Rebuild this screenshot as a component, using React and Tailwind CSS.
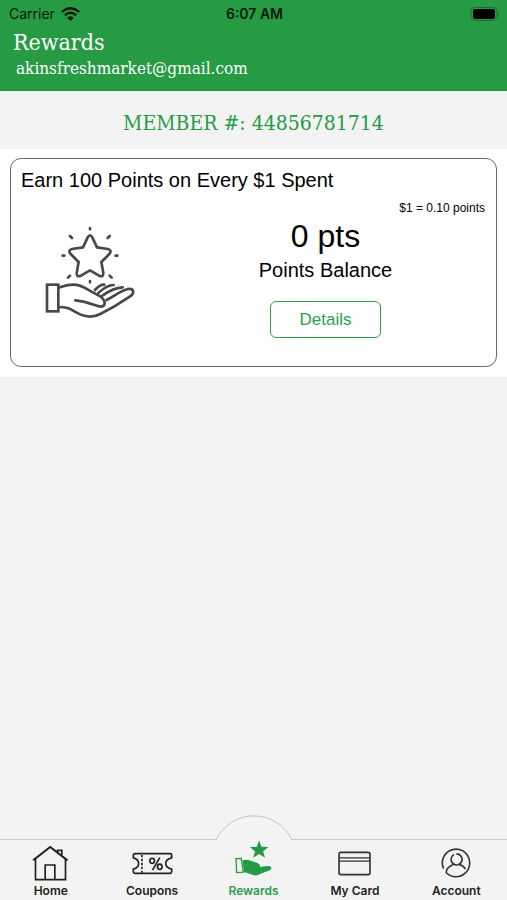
import React from 'react';

const SLAB = "font-['DejaVu_Serif_Condensed','DejaVu_Serif',serif]";

function WifiIcon() {
  return (
    <svg viewBox="0 0 56 42" className="h-[14px] w-[19px]" fill="none" stroke="#061a0b" strokeWidth="7" aria-hidden="true">
      <path d="M2 15 Q28 -8 54 15" />
      <path d="M11 25 Q28 10 45 25" />
      <path d="M18 32 Q28 23 38 32 L28 42 Z" fill="#061a0b" stroke="none" />
    </svg>
  );
}

function BatteryIcon() {
  return (
    <svg viewBox="0 0 30 14" className="h-[14px] w-[30px]" aria-hidden="true">
      <rect x="1" y="0.5" width="26" height="13" rx="4" fill="none" stroke="#1c6e30" />
      <rect x="3" y="2" width="22" height="10" rx="2.5" fill="#000" />
      <path d="M28 4.5 Q30 7 28 9.5 Z" fill="#1c6e30" />
    </svg>
  );
}

function HandStarIcon() {
  return (
    <svg
      viewBox="45 33 270 282"
      className="h-[94px] w-[90px]"
      fill="none"
      stroke="#484848"
      strokeWidth="8"
      strokeLinecap="round"
      strokeLinejoin="round"
      aria-hidden="true"
    >
      <path d="M173 67 Q180 55 187 67 L201 97 L234 102 Q247 106 238 117 L214 141 L220 174 Q220 188 207 182 L180 166 L153 182 Q140 188 140 174 L146 141 L122 117 Q113 106 126 102 L159 97 Z" />
      <path d="M180 39 V43 M180 198 V202 M98 122 H103 M257 122 H262 M120 63 L126 69 M239 63 L233 69 M120 182 L114 188 M239 182 L245 188" />
      <rect x="51" y="209" width="34" height="80" strokeLinejoin="miter" />
      <path d="M85 218 C105 212 112 209 130 209 C158 209 173 226 194 235 C213 244 227 254 224 266 C221 279 207 275 194 270 C173 263 154 257 136 256" />
      <path d="M85 276 C116 276 121 283 140 293 C165 307 190 308 211 297 C241 282 276 261 299 245 C316 233 311 220 294 222 C274 226 255 242 230 255" />
      <path d="M195 225 C203 216 213 208 223 209 M205 234 C219 221 234 210 251 210 M217 242 C235 229 253 218 278 217" />
    </svg>
  );
}

function HomeIcon() {
  return (
    <svg viewBox="100 103 110 108" className="h-[36px] w-[37px]" fill="none" stroke="#202020" strokeWidth="5" aria-hidden="true">
      <path d="M103 149 L154 109 L206 149" strokeWidth="6" />
      <path d="M110 145 V207 H200 V145 M139 207 V163 H168 V207" />
      <path d="M176 124 V119 H189 V134" />
    </svg>
  );
}

function CouponIcon() {
  return (
    <svg viewBox="396 124 124 68" className="h-[23px] w-[41px]" fill="none" stroke="#202020" strokeWidth="5" strokeLinejoin="round" aria-hidden="true">
      <path d="M405 128 H511 Q516 128 516 133 V141 Q498 145 498 158 Q498 171 516 175 V183 Q516 188 511 188 H405 Q400 188 400 183 V175 Q416 171 416 158 Q416 145 400 141 V133 Q400 128 405 128 Z" />
      <path d="M426 132 V186" strokeDasharray="7 5" />
      <ellipse cx="457" cy="150" rx="7" ry="8" />
      <ellipse cx="480" cy="168" rx="7" ry="8" />
      <path d="M480 140 L458 178" />
    </svg>
  );
}

function RewardsIcon() {
  return (
    <svg viewBox="134 88 112 108" className="h-[36px] w-[37px]" fill="#249c43" aria-hidden="true">
      <path d="M207 89 L214 108 L235 109 L219 122 L225 141 L207 130 L189 141 L195 122 L179 109 L200 108 Z" />
      <path d="M137 144 L153 143 L159 185 L139 186 Z" fill="none" stroke="#249c43" strokeWidth="4" />
      <path d="M157 149 Q169 145 181 150 L202 157 Q212 161 209 169 L231 166 Q245 165 244 173 Q243 179 229 183 L207 192 Q197 197 187 193 L161 184 Z" />
    </svg>
  );
}

function CardIcon() {
  return (
    <svg viewBox="82 121 100 76" className="h-[25px] w-[33px]" fill="none" stroke="#333" strokeWidth="5" aria-hidden="true">
      <rect x="85" y="125" width="94" height="68" rx="6" />
      <path d="M85 142 H179 M85 152 H179" strokeWidth="4" />
    </svg>
  );
}

function AccountIcon() {
  return (
    <svg viewBox="392 113 92 92" className="h-[30px] w-[30px]" fill="none" stroke="#333" strokeWidth="5" strokeLinecap="round" aria-hidden="true">
      <path d="M399 174 A42 42 0 1 1 466 190 A42 42 0 0 1 408 189 C408 178 416 169 428 164" />
      <path d="M430 134 A17 17 0 1 0 441 131 M449 164 C456 166 462 170 466 176" />
    </svg>
  );
}

const TABS = [
  { label: 'Home', Icon: HomeIcon },
  { label: 'Coupons', Icon: CouponIcon },
  { label: 'Rewards', Icon: RewardsIcon, active: true },
  { label: 'My Card', Icon: CardIcon },
  { label: 'Account', Icon: AccountIcon },
];

function TabBar() {
  return (
    <nav className="relative flex h-[61px] items-start border-t border-[#cdcdcd] bg-[#f3f3f3]">
      <svg viewBox="0 0 78 26" className="absolute -top-[25px] left-1/2 h-[26px] w-[78px] -translate-x-1/2" aria-hidden="true">
        <path d="M1 26 V25 A42 42 0 0 1 77 25 V26 Z" fill="#f3f3f3" />
        <path d="M1 25 A42 42 0 0 1 77 25" fill="none" stroke="#c4c4c4" />
      </svg>
      {TABS.map(({ label, Icon, active }) => (
        <a
          key={label}
          href={'#' + label.toLowerCase().replace(' ', '-')}
          aria-current={active ? 'page' : undefined}
          className={
            active
              ? 'relative flex h-[60px] flex-1 flex-col items-center justify-end text-[#2d9c4a]'
              : 'relative flex h-[60px] flex-1 flex-col items-center justify-end text-[#222]'
          }
        >
          <span className={active ? 'flex h-[43px] items-start' : 'flex h-[38px] items-center'}>
            <Icon />
          </span>
          <span className="font-['Inter',sans-serif] text-xs font-semibold leading-[18px]">{label}</span>
        </a>
      ))}
    </nav>
  );
}

export default function App() {
  return (
    <div className="flex min-h-screen flex-col bg-[#f3f3f3] font-['Liberation_Sans',Arial,sans-serif] text-black">
      <header className="h-[91px] bg-[#279b43]">
        <div className="grid h-[27px] grid-cols-3 items-center pl-[9px] pr-[7px] font-['Inter',sans-serif] text-sm text-[#061a0b]">
          <div className="flex items-center gap-[6px]">
            <span>Carrier</span>
            <WifiIcon />
          </div>
          <time className="text-center font-semibold">6:07 AM</time>
          <div className="flex justify-end">
            <BatteryIcon />
          </div>
        </div>
        <div className={`text-white ${SLAB}`}>
          <h1 className="pl-[13px] text-[23px] leading-[30px]">Rewards</h1>
          <p className="pl-4 text-[17px] leading-[22px]">akinsfreshmarket@gmail.com</p>
        </div>
      </header>

      <h2 className={`mt-[2px] h-[56px] text-center text-[21px] leading-[60px] text-[#249c43] ${SLAB}`}>
        MEMBER #: 44856781714
      </h2>

      <main className="flex-1">
        <section className="bg-white px-[10px] pb-[10px] pt-[9px]">
          <div className="h-[209px] rounded-[11px] border border-[#6b6b6b] px-[10px] pt-[9px]">
            <h3 className="text-[20px] leading-6">Earn 100 Points on Every $1 Spent</h3>
            <div className="flex">
              <div className="w-[144px] pl-6 pt-[34px]">
                <HandStarIcon />
              </div>
              <div className="flex flex-1 flex-col">
                <p className="pr-[1px] pt-2 text-right text-[12px] leading-4">$1 = 0.10 points</p>
                <div className="flex flex-col items-center">
                  <p className="mt-[2px] text-[32px] leading-[36px]">0 pts</p>
                  <p className="mt-1 text-[20px] leading-6">Points Balance</p>
                  <button type="button" className="mt-[19px] h-[37px] w-[111px] rounded-[6px] border border-[#2ea04d] bg-white text-[17px] text-[#2ea04d]">
                    Details
                  </button>
                </div>
              </div>
            </div>
          </div>
        </section>
      </main>

      <TabBar />
    </div>
  );
}
